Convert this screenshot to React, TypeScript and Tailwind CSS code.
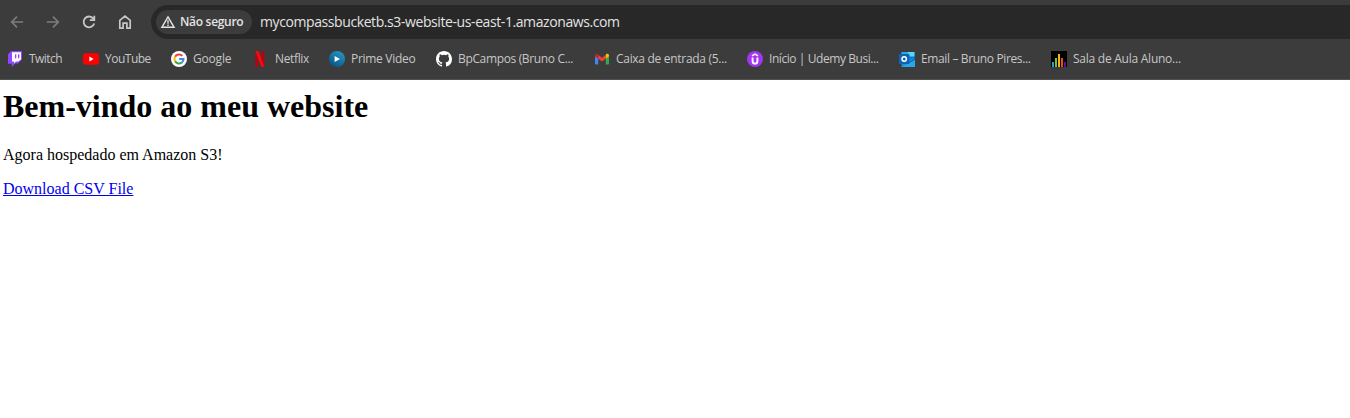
import type { ReactNode } from 'react';

const Twitch = () => (
  <svg viewBox="0 0 16 16" className="size-4 shrink-0">
    <path d="M1 3.2 4 0h11v8.6l-4.2 4h-2.6L4.7 16v-3.2H1z" fill="#9146ff" />
    <path d="M5 1.2h9v7L11.6 10.500H9L7 12.400v-1.900H5z" fill="#fff" />
    <path d="M8 3.200h1.300v4H8zM11 3.200h1.300v4H11z" fill="#9146ff" />
  </svg>
);

const YouTube = () => (
  <svg viewBox="0 0 16 16" className="size-4 shrink-0">
    <rect x="0" y="2.300" width="16" height="11.400" rx="3" fill="#f00" />
    <path d="M6.400 5.600 10.600 8l-4.200 2.400z" fill="#fff" />
  </svg>
);

const Google = () => (
  <svg viewBox="0 0 16 16" className="size-4 shrink-0">
    <circle cx="8" cy="8" r="8" fill="#fff" />
    <g fill="none" strokeWidth="2.100">
      <path d="M4.100 5.750A4.500 4.500 0 0 1 11.300 4.900" stroke="#ea4335" />
      <path d="M4.100 10.250a4.500 4.500 0 0 1 0-4.500" stroke="#fbbc05" />
      <path d="M10.900 11.450A4.500 4.500 0 0 1 4.100 10.250" stroke="#34a853" />
      <path d="M8.200 8.050h4.300a4.500 4.500 0 0 1-1.600 3.400" stroke="#4285f4" />
    </g>
  </svg>
);

const Netflix = () => (
  <svg viewBox="0 0 16 16" className="size-4 shrink-0">
    <path d="M2.400 0h3v15.700l-3 .3zM8.400 0h3v16l-3-.4z" fill="#b1060f" />
    <path d="M2.400 0h3.200l5.800 16-3.200-.4z" fill="#f20a16" />
  </svg>
);

const PrimeVideo = () => (
  <svg viewBox="0 0 16 16" className="size-4 shrink-0">
    <defs>
      <linearGradient id="prime" x1="0.8" y1="0" x2="0.2" y2="1">
        <stop offset="0" stopColor="#2398c7" />
        <stop offset="1" stopColor="#075184" />
      </linearGradient>
    </defs>
    <circle cx="8" cy="8" r="8" fill="url(#prime)" />
    <path d="M5.600 4.900 11 8l-5.400 3.100z" fill="#fff" />
  </svg>
);

const GitHub = () => (
  <svg viewBox="0 0 16 16" className="size-4 shrink-0" fill="#fff">
    <path d="M8 0C3.580 0 0 3.580 0 8c0 3.540 2.290 6.530 5.470 7.590.4.070.55-.17.55-.38 0-.19-.01-.82-.01-1.490-2.010.37-2.530-.49-2.690-.94-.09-.23-.48-.94-.82-1.130-.28-.15-.68-.52-.01-.53.63-.01 1.080.58 1.230.82.72 1.210 1.870.87 2.330.66.07-.52.28-.87.51-1.070-1.780-.2-3.640-.89-3.640-3.950 0-.87.31-1.590.82-2.150-.08-.2-.36-1.020.08-2.120 0 0 .67-.21 2.200.82a7.600 7.600 0 0 1 4 0c1.530-1.040 2.200-.82 2.200-.82.44 1.100.16 1.920.08 2.120.51.56.82 1.270.82 2.150 0 3.070-1.870 3.750-3.650 3.950.29.25.54.73.54 1.480 0 1.070-.01 1.930-.01 2.200 0 .21.15.46.55.38A8.010 8.010 0 0 0 16 8c0-4.420-3.580-8-8-8" />
  </svg>
);

const Gmail = () => (
  <svg viewBox="0 0 16 16" className="size-4 shrink-0">
    <path d="M1 4.500 4.200 7v6.400H2a1 1 0 0 1-1-1z" fill="#4285f4" />
    <path d="M15 4.500 11.800 7v6.400H14a1 1 0 0 0 1-1z" fill="#34a853" />
    <path d="M4.200 3.800 8 6.700l3.800-2.900v3.900L8 10.600 4.200 7.700z" fill="#ea4335" />
    <path d="M1 4.400c0-1.600 1.700-2.100 2.700-1.300l.5.500v4.100L1 5.300z" fill="#c5221f" />
    <path d="M15 4.400c0-1.600-1.700-2.100-2.700-1.300l-.5.500v4.100L15 5.300z" fill="#fbbc04" />
  </svg>
);

const Udemy = () => (
  <svg viewBox="0 0 16 16" className="size-4 shrink-0">
    <circle cx="8" cy="8" r="8" fill="#a435f0" />
    <path d="M5 4.900 8 3.200l3 1.700" fill="none" stroke="#fff" strokeWidth="1.500" />
    <path d="M5.600 6.500v3.700a2.400 2.400 0 0 0 4.800 0V6.500" fill="none" stroke="#fff" strokeWidth="1.900" />
  </svg>
);

const Outlook = () => (
  <svg viewBox="0 0 16 16" className="size-4 shrink-0">
    <path d="M2.500 1h13v9h-13z" fill="#0f78d4" />
    <path d="M9 1h6.500v4.500H9z" fill="#50d9ff" />
    <path d="M2.500 1H9v4.500H2.500z" fill="#28a8ea" />
    <path d="M2.500 8.500 16 7.600V16H2.500z" fill="#1490df" />
    <path d="M16 7.600V16l-7-4.400z" fill="#1066b5" />
    <path d="m2.500 16 13.500-7v7z" fill="#28a8ea" />
    <rect y="3" width="10.500" height="10" rx=".8" fill="#0f62b4" />
    <ellipse cx="5.200" cy="8" rx="2.200" ry="2.300" fill="none" stroke="#fff" strokeWidth="1.500" />
  </svg>
);

const Classroom = () => (
  <svg viewBox="0 0 16 16" className="size-4 shrink-0" shapeRendering="crispEdges">
    <path fill="#000" d="M0 0h16v16H0z" />
    <path fill="#16a4e8" d="M1 11h2v5H1z" />
    <path fill="#7ac32b" d="M4 7h2v9H4z" />
    <path fill="#f5b70b" d="M7 3h2v13H7z" />
    <path fill="#ee4b20" d="M10 7h2v9h-2z" />
    <path fill="#5c168b" d="M13 11h2v5h-2z" />
  </svg>
);

interface BookmarkProps {
  icon: ReactNode;
  label: string;
  width: string;
  tracking: string;
}

const bookmarks: BookmarkProps[] = [
  { icon: <Twitch />, label: 'Twitch', width: 'w-[76px]', tracking: 'tracking-[-0.55px]' },
  { icon: <YouTube />, label: 'YouTube', width: 'w-[88px]', tracking: 'tracking-[-0.5px]' },
  { icon: <Google />, label: 'Google', width: 'w-[82px]', tracking: 'tracking-[-0.2px]' },
  { icon: <Netflix />, label: 'Netflix', width: 'w-[76px]', tracking: 'tracking-[-0.35px]' },
  { icon: <PrimeVideo />, label: 'Prime Video', width: 'w-[107px]', tracking: 'tracking-[-0.3px]' },
  { icon: <GitHub />, label: 'BpCampos (Bruno C...', width: 'w-[158px]', tracking: 'tracking-[-0.35px]' },
  { icon: <Gmail />, label: 'Caixa de entrada (5...', width: 'w-[153px]', tracking: 'tracking-[-0.3px]' },
  { icon: <Udemy />, label: 'Início | Udemy Busi...', width: 'w-[152px]', tracking: 'tracking-[-0.43px]' },
  { icon: <Outlook />, label: 'Email – Bruno Pires...', width: 'w-[152px]', tracking: 'tracking-[-0.36px]' },
  { icon: <Classroom />, label: 'Sala de Aula Aluno...', width: 'w-[152px]', tracking: 'tracking-[-0.25px]' },
];

const Bookmark = ({ icon, label, width, tracking }: BookmarkProps) => (
  <button className={`flex shrink-0 items-center gap-1.5 whitespace-nowrap ${width}`}>
    {icon}
    <span className={tracking}>{label}</span>
  </button>
);

export default function App() {
  return (
    <div className="flex h-[418px] flex-col overflow-hidden bg-white">
      <header className="h-20 shrink-0 border-b border-[#505050] bg-[#3c3c3c] font-['Open_Sans',sans-serif]">
        <div className="flex h-11 items-center pl-2">
          <nav className="flex w-[143px] shrink-0 gap-[18px] text-[#c7c7c7]">
            <button aria-label="Voltar" className="text-[#7c7c7c]">
              <svg viewBox="0 0 18 18" className="size-[18px]" fill="none" stroke="currentColor" strokeWidth="1.700">
                <path d="M15.200 9H4M9 3.700 3.700 9 9 14.300" />
              </svg>
            </button>
            <button aria-label="Avançar" className="text-[#7c7c7c]">
              <svg viewBox="0 0 18 18" className="size-[18px]" fill="none" stroke="currentColor" strokeWidth="1.700">
                <path d="M2.800 9H14M9 3.700 14.300 9 9 14.300" />
              </svg>
            </button>
            <button aria-label="Recarregar">
              <svg viewBox="0 0 18 18" className="size-[18px]" fill="none" stroke="currentColor" strokeWidth="1.800">
                <path d="M13.300 5.600A5.400 5.400 0 1 0 14.200 10.500M14.300 2.700v4.500H9.800" />
              </svg>
            </button>
            <button aria-label="Página inicial">
              <svg viewBox="0 0 18 18" className="size-[18px]" fill="none" stroke="currentColor" strokeWidth="1.700">
                <path d="M3.800 15.200V7.300L9 3.200l5.200 4.100v7.900h-3.300v-5H7.100v5z" />
              </svg>
            </button>
          </nav>
          <div className="flex h-[34px] grow items-center rounded-l-full bg-[#282828] pl-[5px]">
            <div className="flex h-6 w-24 shrink-0 items-center gap-1 rounded-full bg-[#3c3c3c] pl-1 text-xs font-semibold whitespace-nowrap text-[#e3e3e3]">
              <svg viewBox="0 0 16 16" className="size-4 shrink-0" fill="none" stroke="currentColor" strokeWidth="1.400">
                <path d="M8 2.800 14.100 13.300H1.900z" />
                <path d="M8 6.300v3.400M8 10.500v1.400" />
              </svg>
              <span className="tracking-[-0.3px]">Não seguro</span>
            </div>
            <span className="ml-2 text-sm tracking-[-0.41px] whitespace-nowrap text-[#e3e3e3]">
              mycompassbucketb.s3-website-us-east-1.amazonaws.com
            </span>
          </div>
        </div>
        <div className="flex h-[30px] items-center pl-[7px] text-xs text-[#c7c7c7]">
          {bookmarks.map((b) => (
            <Bookmark key={b.label} {...b} />
          ))}
        </div>
      </header>
      <main className="pl-[3px] font-['Liberation_Serif',serif] text-base text-black">
        <h1 className="mt-2 text-[32px] leading-[37px] font-bold">Bem-vindo ao meu website</h1>
        <p className="mt-[21px] leading-[18px]">Agora hospedado em Amazon S3!</p>
        <a href="#" className="mt-4 block w-fit leading-[18px] text-[#0000ee] underline">
          Download CSV File
        </a>
      </main>
    </div>
  );
}
